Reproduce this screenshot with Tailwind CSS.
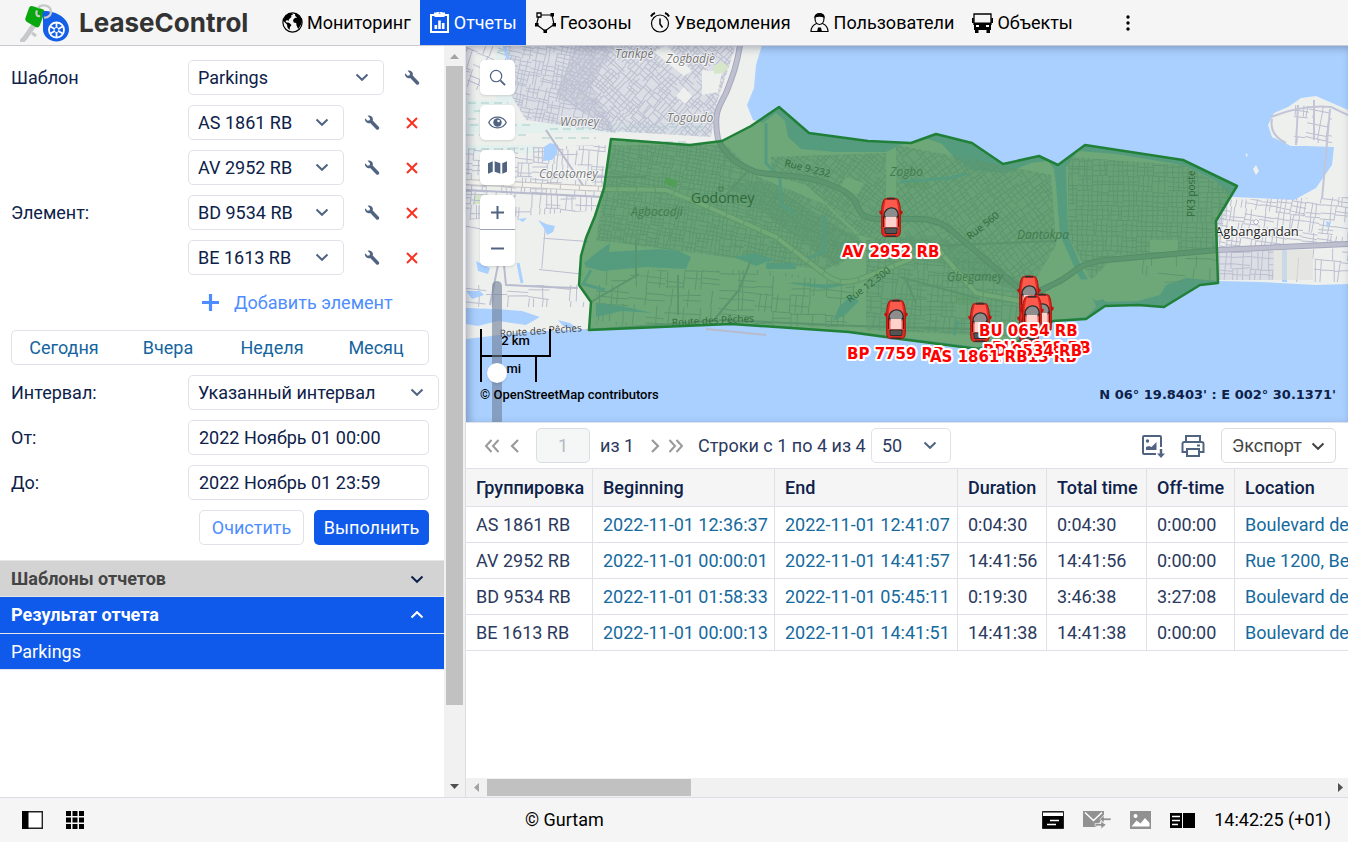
<!DOCTYPE html>
<html lang="ru">
<head>
  <meta charset="UTF-8" />
  <meta name="viewport" content="width=device-width, initial-scale=1.0" />
  <title>LeaseControl - Отчеты</title>
  <script src="https://cdn.jsdelivr.net/npm/@tailwindcss/browser@4"></script>
</head>
<body class="flex h-screen flex-col overflow-hidden bg-white font-['Roboto','Liberation_Sans',sans-serif] text-[18px] leading-6 text-[#0d2149]">

  <!-- shared icons -->
  <svg class="hidden" aria-hidden="true">
    <symbol id="chevron" viewBox="0 0 14 14"><path d="M1.5 4.500 7 9.800l5.500-5.300" fill="none" stroke="currentColor" stroke-width="2" /></symbol>
    <symbol id="wrench" viewBox="0 0 16 16"><path d="M1 3.200 3.600 5.700 5.700 5.200 6 3.200 3.600.8C5.800.1 8 1 8.700 3c.3.9.2 1.700 0 2.500l6 6.200c.7.8.7 1.700 0 2.500-.8.700-1.800.7-2.500 0L6.200 8.100c-.8.300-1.700.2-2.500-.1C1.600 7.200.5 5.200 1 3.200z" fill="currentColor" /></symbol>
    <symbol id="cross" viewBox="0 0 12 12"><path d="m1 1 10 10M11 1 1 11" stroke="currentColor" stroke-width="2" /></symbol>
    <symbol id="car" viewBox="0 0 24 41">
      <path d="M0 14.500 5 12v5l-4 .5zM24 14.500 19 12v5l4 .5z" fill="#c3150f" />
      <path d="M5 2.500C7 .4 17 .4 19 2.500c1.500 3 2.500 8 2.300 13v19c-.2 3-1.300 4.700-3.300 5.200H6c-2-.5-3.100-2.200-3.300-5.200v-19C2.500 10.500 3.500 5.500 5 2.500z" fill="#e0291f" stroke="#a8130d" />
      <path d="M6.500 3h11l1.700 9v20l-1.700 5h-11l-1.700-5V12z" fill="#fb5a4c" />
      <path d="M8 .9h8v1.500H8zM7 38.600h10V40H7z" fill="#333" />
      <path d="M5 18C5.500 9.500 18.500 7.500 19.300 18l-1.800 3h-11z" fill="#8d8d8d" stroke="#2d2d2d" stroke-width="1.400" />
      <path d="M6.500 20h11V30h-11z" fill="#ffd2cd" />
      <path d="M5.600 31h12.800l-.8 5.500H6.400z" fill="#555" stroke="#2d2d2d" />
      <path d="M4.500 19v11M19.500 19v11" stroke="#79100d" stroke-width="1.200" />
    </symbol>
  </svg>

  <header class="relative z-10 flex h-[45px] shrink-0 items-stretch bg-[#f5f5f5] text-black shadow-[0_1px_0_#c9cad1]">
    <a href="#" class="flex w-[273px] items-center gap-[9px] pl-5">
      <svg class="h-[38px] w-[50px]" viewBox="0 0 50 38">
        <path d="M14 21 5 34l-3 3" fill="none" stroke="#c6c8c9" stroke-width="5" stroke-linecap="round" />
        <path d="m12 29 4 3" stroke="#c6c8c9" stroke-width="3" />
        <path d="M12 2 22 5c2 .6 3 2 2.300 4L20 21c-.7 2-2.300 3-4.300 2L7 18c-1.600-1-2.200-2.500-1.500-4.200L9 4c.5-1.500 1.500-2.300 3-2z" fill="#0aa80f" />
        <path d="M25 7c9 0 24 6 24 18.500C49 32 43.500 37.500 36.500 37.500S23 32 23 25.500c0-5 .3-9-.5-15C22.300 8.500 23 7 25 7z" fill="#145fe8" />
        <path d="M17 6.500C15.500 10 17 13 20 12M18 4c3-4 13-3.500 13 4 0 3-3 6-7 5.500" fill="none" stroke="#c6c8c9" stroke-width="2.200" />
        <circle cx="36.500" cy="26" r="7.500" fill="none" stroke="#fff" stroke-width="1.800" />
        <path d="M36.500 19v14M30.400 22.500l12.200 7M42.600 22.500l-12.200 7" stroke="#fff" stroke-width="1.700" />
        <circle cx="36.500" cy="26" r="2.500" fill="#145fe8" stroke="#fff" />
      </svg>
      <span class="font-['Inter',sans-serif] text-[26px] font-bold text-[#333]">LeaseControl</span>
    </a>
    <nav class="flex items-stretch">
      <a href="#" class="flex items-center gap-1 px-[9px]">
        <svg class="size-[21px]" viewBox="0 0 21 21">
          <circle cx="10.500" cy="10.500" r="9.600" fill="none" stroke="#000" stroke-width="1.200" />
          <path d="M2.500 5.500C4 3 6.500 1.300 9.500 1l1.500 1.800-2 .7.500 1.500-2.500 2.300L6.500 9 5 8l-1.500 1 1 1.500 2.500.3 2.500 2.200-1.500 2-.5 3-2-2.500-.5-3L2.500 10l-1-1zM13 1.300c3.500.9 6.300 4 6.700 7.700l.1 1.500-1.300 3-2.300 3.500-1.700-3.500-.3-2.500-2.500-.5L11 8l1.800-2 2.400-.5-2-1.500z" fill="#000" />
        </svg>
        Мониторинг
      </a>
      <a href="#" class="flex items-center gap-1 bg-[#105aeb] px-[9px] text-white" aria-current="page">
        <svg class="size-[21px]" viewBox="0 0 21 21">
          <path d="M2 3h4V1.500h2.500a2 2 0 0 1 4 0H15V3h4v17H2z" fill="none" stroke="#fff" stroke-width="2" />
          <path d="M5.500 1.500h10V5h-10z" fill="#fff" />
          <path d="M5.500 13h2.700v4H5.500zM9.200 8.500h2.600V17H9.200zM12.900 11h2.600v6h-2.600z" fill="#fff" />
        </svg>
        Отчеты
      </a>
      <a href="#" class="flex items-center gap-1 px-[9px]">
        <svg class="size-[21px]" viewBox="0 0 21 21">
          <path d="m4 3 13 0 2 9.500-9 6.500-8.500-6.500z" fill="none" stroke="#000" stroke-width="1.200" />
          <path d="M2 1h4v4H2z" fill="#f5f5f5" stroke="#000" stroke-width="1.300" />
          <path d="M15.500 1H19v3.500h-3.500zM0 11h3.500v3.500H0zM17.500 11H21v3.500h-3.500zM8.500 17.500H12V21H8.500z" />
        </svg>
        Геозоны
      </a>
      <a href="#" class="flex items-center gap-1 px-[9px]">
        <svg class="size-[21px]" viewBox="0 0 21 21" fill="none" stroke="#000">
          <circle cx="10" cy="11.500" r="8.500" stroke-width="1.200" />
          <path d="M10 6.500V12l2.500 3.500" stroke-width="1.500" />
          <path d="M1 4.500C1.800 2.800 3 1.600 5 1M19 4.500C18.200 2.800 17 1.600 15 1" stroke-width="2" />
        </svg>
        Уведомления
      </a>
      <a href="#" class="flex items-center gap-1 px-[9px]">
        <svg class="size-[21px]" viewBox="0 0 21 21" fill="none" stroke="#000" stroke-width="1.200">
          <path d="M6 6c0-3 2-4.500 4.500-4.500S15 3 15 6c0 4-2 6.500-4.500 6.500S6 10 6 6zM7.500 11.500C4 13 2 15 2 19.500h17c0-4.500-2-6.500-5.500-8" />
          <path d="M6 5C6 1 15 1 15 5c-2-1.200-7-1.200-9 0zM9.500 16h2l.8 3.500H8.700z" fill="#000" />
        </svg>
        Пользователи
      </a>
      <a href="#" class="flex items-center gap-1 px-[9px]">
        <svg class="size-[21px]" viewBox="0 0 21 21">
          <path d="M2 13V2h17v11" fill="none" stroke="#000" stroke-width="1.300" />
          <path d="M0 6h1.800v5H0zM19.200 6H21v5h-1.800zM2 10.500h17V18h-1v3h-3.500v-3h-8v3H3v-3H2z" />
          <path d="M4 13h3v2H4zM14 13h3v2h-3z" fill="#f5f5f5" />
        </svg>
        Объекты
      </a>
    </nav>
    <button type="button" class="ml-9 w-5" aria-label="Ещё">
      <svg class="mx-auto h-4 w-1" viewBox="0 0 4 16"><circle cx="2" cy="2" r="1.700" /><circle cx="2" cy="8" r="1.700" /><circle cx="2" cy="14" r="1.700" /></svg>
    </button>
  </header>

  <main class="flex min-h-0 flex-1">
    <aside class="flex w-[466px] shrink-0 border-r border-[#dcdde4]">
      <div class="min-w-0 flex-1">
        <form class="grid grid-cols-1 gap-2.5 pt-[15px] pr-[15px] pb-[15px] pl-[11px]" onsubmit="return false">
          <div class="flex items-center">
            <label for="template" class="w-[177px]">Шаблон</label>
            <div class="relative w-[196px]">
              <select id="template" class="h-[35px] w-full appearance-none rounded-[5px] border border-[#e1e1ea] bg-white pl-[9px]"><option>Parkings</option></select>
              <svg class="pointer-events-none absolute top-[10px] right-[15px] size-3.5 text-[#506482]"><use href="#chevron" /></svg>
            </div>
            <button type="button" class="ml-5 text-[#506482]" aria-label="Настроить шаблон"><svg class="size-4"><use href="#wrench" /></svg></button>
          </div>

          <div class="flex items-center">
            <span class="w-[177px]">Элемент:</span>
            <div class="grid flex-1 gap-2.5">
              <div class="flex items-center">
                <div class="relative w-[156px]">
                  <select aria-label="Элемент 1" class="h-[35px] w-full appearance-none rounded-[5px] border border-[#e1e1ea] bg-white pl-[9px]"><option>AS 1861 RB</option></select>
                  <svg class="pointer-events-none absolute top-[10px] right-[15px] size-3.5 text-[#506482]"><use href="#chevron" /></svg>
                </div>
                <button type="button" class="ml-5 text-[#506482]" aria-label="Настроить"><svg class="size-4"><use href="#wrench" /></svg></button>
                <button type="button" class="ml-[26px] text-[#f9311f]" aria-label="Удалить"><svg class="size-3"><use href="#cross" /></svg></button>
              </div>
              <div class="flex items-center">
                <div class="relative w-[156px]">
                  <select aria-label="Элемент 2" class="h-[35px] w-full appearance-none rounded-[5px] border border-[#e1e1ea] bg-white pl-[9px]"><option>AV 2952 RB</option></select>
                  <svg class="pointer-events-none absolute top-[10px] right-[15px] size-3.5 text-[#506482]"><use href="#chevron" /></svg>
                </div>
                <button type="button" class="ml-5 text-[#506482]" aria-label="Настроить"><svg class="size-4"><use href="#wrench" /></svg></button>
                <button type="button" class="ml-[26px] text-[#f9311f]" aria-label="Удалить"><svg class="size-3"><use href="#cross" /></svg></button>
              </div>
              <div class="flex items-center">
                <div class="relative w-[156px]">
                  <select aria-label="Элемент 3" class="h-[35px] w-full appearance-none rounded-[5px] border border-[#e1e1ea] bg-white pl-[9px]"><option>BD 9534 RB</option></select>
                  <svg class="pointer-events-none absolute top-[10px] right-[15px] size-3.5 text-[#506482]"><use href="#chevron" /></svg>
                </div>
                <button type="button" class="ml-5 text-[#506482]" aria-label="Настроить"><svg class="size-4"><use href="#wrench" /></svg></button>
                <button type="button" class="ml-[26px] text-[#f9311f]" aria-label="Удалить"><svg class="size-3"><use href="#cross" /></svg></button>
              </div>
              <div class="flex items-center">
                <div class="relative w-[156px]">
                  <select aria-label="Элемент 4" class="h-[35px] w-full appearance-none rounded-[5px] border border-[#e1e1ea] bg-white pl-[9px]"><option>BE 1613 RB</option></select>
                  <svg class="pointer-events-none absolute top-[10px] right-[15px] size-3.5 text-[#506482]"><use href="#chevron" /></svg>
                </div>
                <button type="button" class="ml-5 text-[#506482]" aria-label="Настроить"><svg class="size-4"><use href="#wrench" /></svg></button>
                <button type="button" class="ml-[26px] text-[#f9311f]" aria-label="Удалить"><svg class="size-3"><use href="#cross" /></svg></button>
              </div>
              <button type="button" class="flex h-[35px] items-center gap-[15px] pl-3.5 text-[#4d8dff]">
                <svg class="size-[17px]" viewBox="0 0 17 17"><path d="M8.500 0v17M0 8.500h17" stroke="currentColor" stroke-width="3.200" /></svg>
                Добавить элемент
              </button>
            </div>
          </div>

          <div class="grid h-[35px] grid-cols-4 rounded-[5px] border border-[#e1e1ea] text-[#15659e]">
            <button type="button">Сегодня</button>
            <button type="button">Вчера</button>
            <button type="button">Неделя</button>
            <button type="button">Месяц</button>
          </div>

          <div class="-mr-2.5 flex items-center">
            <label for="interval" class="w-[177px]">Интервал:</label>
            <div class="relative flex-1">
              <select id="interval" class="h-[35px] w-full appearance-none rounded-[5px] border border-[#e1e1ea] bg-white pl-[9px]"><option>Указанный интервал</option></select>
              <svg class="pointer-events-none absolute top-[10px] right-[15px] size-3.5 text-[#506482]"><use href="#chevron" /></svg>
            </div>
          </div>
          <div class="flex items-center">
            <label for="from" class="w-[177px]">От:</label>
            <input id="from" type="text" value="2022 Ноябрь 01 00:00" class="h-[35px] min-w-0 flex-1 rounded-[5px] border border-[#e1e1ea] px-2.5" />
          </div>
          <div class="flex items-center">
            <label for="to" class="w-[177px]">До:</label>
            <input id="to" type="text" value="2022 Ноябрь 01 23:59" class="h-[35px] min-w-0 flex-1 rounded-[5px] border border-[#e1e1ea] px-2.5" />
          </div>
          <div class="flex justify-end gap-2.5">
            <button type="button" class="h-[35px] w-[105px] rounded-[5px] border border-[#e1e1ea] text-[#4d8dff]">Очистить</button>
            <button type="submit" class="h-[35px] w-[115px] rounded-[5px] bg-[#105aeb] text-white">Выполнить</button>
          </div>
        </form>

        <button type="button" class="flex h-[37px] w-full items-center justify-between border-t border-b border-[#e6e6e6] bg-[#d3d3d3] pr-5 pl-[11px] font-bold text-[#444]">
          Шаблоны отчетов
          <svg class="size-3.5 text-[#0d2149]"><use href="#chevron" /></svg>
        </button>
        <button type="button" class="flex h-[37px] w-full items-center justify-between border-b border-[#e6e6e6] bg-[#105aeb] pr-5 pl-[11px] font-bold text-white">
          Результат отчета
          <svg class="size-3.5 rotate-180"><use href="#chevron" /></svg>
        </button>
        <button type="button" class="flex h-9 w-full items-center border-b border-[#e6e6e6] bg-[#105aeb] pl-[11px] text-white">Parkings</button>
      </div>

      <!-- vertical scrollbar -->
      <div class="flex w-[21px] flex-col items-center bg-[#f1f1f1]" aria-hidden="true">
        <svg class="h-[21px] w-[9px] text-[#a3a3a3]" viewBox="0 0 9 21"><path d="m0 14 4.500-5L9 14z" fill="currentColor" /></svg>
        <div class="w-[17px] flex-1"><div class="h-[90%] bg-[#c1c1c1]"></div></div>
        <svg class="h-[21px] w-[9px] text-[#505050]" viewBox="0 0 9 21"><path d="m0 8 4.500 5L9 8z" fill="currentColor" /></svg>
      </div>
    </aside>

    <section class="flex min-w-0 flex-1 flex-col">
      <div class="relative h-[377px] shrink-0 overflow-hidden bg-[#aad0ff]">
        <svg id="map" class="absolute inset-0 h-[377px] w-full min-w-[882px]" viewBox="0 0 882 377" preserveAspectRatio="xMinYMin slice" role="img" aria-label="Карта">
          <!-- land -->
          <g fill="#eef0ee">
            <path d="M0 0H296L290 20 288 43 281 60 287 75 297 78 310 68 319 76 322 92 335 104 370 107 420 107 434 100 462 94 476 99 488 112 505 125 540 128 565 118 582 116 588 124 590 140 594 190 612 230 626 250 630 262 620 272 587 275 550 292 512 302 434 292 383 286 265 278 123 284 60 287 0 294Z" />
            <path d="M600 122 612 106 650 109 717 120 748 135 766 152 790 153 828 155 850 143 866 120 868 102 840 101 825 101 806 92 802 80 808 68 822 62 835 53 850 51 866 58 882 65V239L850 240 795 237 752 236 720 233 700 240 694 250 672 256 640 257 632 250 618 228 602 190Z" />
            <path d="m790 120 3 6-3 4-3-6zM780 108l2 2-2 2z" />
          </g>
          <!-- marshes and parks -->
          <path d="M0 55h40v14H0zM0 78h240v10H0zM0 100h70v8H0zM30 0h18v60H30z" fill="#e4f0ee" />
          <path d="M2 58h40M8 66h32M2 74h36M4 80h60m20 4h60m20-2h74M0 90h62m14 3h54m30 4h60M2 104h56M32 6h14m-12 10h14M32 28h14m-12 12h14M362 190h40m-34 8h52m-46 8h40" stroke="#a5cfc8" stroke-dasharray="8 5" />
          <g fill="#d5e6c9">
            <path d="M8 150h8v9H8zM492 250h18v10h-18zM110 48h9v5h-9zM440 137h24v6h-24z" />
          </g>
          <!-- streets are filled in by the script below -->
          <g id="streets" fill="none" stroke="#bcbfd0"></g>
          <g fill="#eef0ee">
            <path d="m218 42 8 9-7 8-9-8zM200 0l26 26-8 5-30-24zM380 132l18 6-6 11-20-3zM236 50V25l20 2-4 20zM684 195h28v12h-28zM610 235l30-2 20 15-30 8z" />
          </g>
          <path d="m248 20 8-3 6 4-4 7-10 1z" fill="#d5e6c9" />
          <path d="m200 132 12 4-3 7-10-4z" fill="#a0d690" />
          <!-- lakes and channels -->
          <g fill="#aad0ff">
            <path d="m78 102 6-4 8 2-1 9-5 6-9 1zM72 175l8 4 9 2-2 6-6 3-3-7zM52 174l9-1-4 4zM0 263l30 1 26 2 18 6-14 8-28-4-20 5-12-2zM10 216l14 7-2 6-10-3zM92 275l12 3 8 6-14-2zM0 246h14l4 4-12 4z" />
            <path d="m118 218 12-10 14-10-1 9 50-3 20 2 12 6-5 12-40-2-44 4-16-4zM268 212l20-4 20 6-18 7zM300 218h30v6h-30zM130 258l30 4 26 6-30-2-26 6zM385 250l8 6-14 14-12 6 6-14zM320 238l60 2-20 4z" />
            <path d="M816 205h5v32h-5zM860 176l5 2-4 5z" />
          </g>
          <g fill="none" stroke="#aad0ff" stroke-width="3">
            <path d="M300 78v40l14 16 1 25 14 10M358 170v36l-16 8M125 225l-8 14 22 6M52 218l4 20M38 0l4 14M434 137l50-4 16-4M488 290l4-14" />
          </g>
          <!-- roads -->
          <g fill="none" stroke-linejoin="round">
            <path d="M0 145 138 152M80 85l40 60M36 200l-12 60M36 200 40 240 80 242 112 243M170 195v38M125 257l48-28M212 230v40M285 215l-12 30-25 30M120 285l140-10 130 6 150 4M130 132h50M260 150l22-24M300 290l-60-6M450 258 440 235M434 232l80 22M558 250 600 232M590 196l-160 6" stroke="#b8bbcd" stroke-width="2" />
            <path d="M274 0c-3 20-7 30-14 48-7 14-13 20-8 46 8 18 20 26 38 33 18 4 34 2 60 8 26 8 38 14 42 28 4 10 14 12 34 11 30-1 46-1 60 12l70 60c14 6 20-2 34-8 18-8 20-20 50-23l112-10 130-6" stroke="#a5a8bd" stroke-width="6" />
            <path d="M274 0c-3 20-7 30-14 48-7 14-13 20-8 46 8 18 20 26 38 33 18 4 34 2 60 8 26 8 38 14 42 28 4 10 14 12 34 11 30-1 46-1 60 12l70 60c14 6 20-2 34-8 18-8 20-20 50-23l112-10 130-6" stroke="#bec0d0" stroke-width="4" />
            <path d="m0 137 140 7 60 1 40 16 70 31 50 38c10 8 20 9 35 4l45-18 30-14 40 46 55 10" stroke="#c6c4c4" stroke-width="6" />
            <path d="m0 137 140 7 60 1 40 16 70 31 50 38c10 8 20 9 35 4l45-18 30-14 40 46 55 10" stroke="#f4f2ec" stroke-width="4" stroke-dasharray="18 1" />
            <path d="M805 72c20-8 40-12 60-10l17 8M864 64l-8 90M832 60l-2 40M848 55v40M820 98c-12-6-16-14-14-24" stroke="#c2c5d6" stroke-width="2" />
          </g>
          <path d="M807 205h40v30h-40z" fill="#dfdfd9" opacity=".6" />
          <!-- place names -->
          <g font-family="'Open Sans', 'DejaVu Sans', sans-serif" fill="#777" stroke="#fff" stroke-opacity=".7" stroke-width="2" paint-order="stroke" font-size="12">
            <g font-style="italic">
              <text x="149" y="13">Tankpè</text>
              <text x="200" y="18">Zogbadjè</text>
              <text x="94" y="81">Womey</text>
              <text x="201" y="77">Togoudo</text>
              <text x="73" y="133">Cocotomey</text>
              <g stroke-width="0">
                <text x="165" y="171">Agbocodji</text>
                <text x="424" y="131">Zogbo</text>
                <text x="551" y="194">Dantokpa</text>
                <text x="481" y="236">Gbegamey</text>
              </g>
            </g>
            <g fill="#444" stroke-width="0">
              <text x="34" y="292" font-size="10" transform="rotate(-4 34 292)">Route des Pêches</text>
              <text x="206" y="281" font-size="10" transform="rotate(-3 206 281)">Route des Pêches</text>
              <text x="318" y="121" font-size="10" transform="rotate(14 318 121)">Rue 9-232</text>
              <text x="384" y="258" font-size="10" transform="rotate(-37 384 258)">Rue 12.300</text>
              <text x="504" y="195" font-size="10" transform="rotate(-38 504 195)">Rue 560</text>
              <text x="729" y="172" font-size="10" transform="rotate(-90 729 172)">PK3 poste</text>
              <text x="225" y="158" font-size="14">Godomey</text>
              <text x="749" y="191" font-size="13" fill="#222" stroke-width="2">Agbangandan</text>
            </g>
            <rect x="253" y="142" width="4" height="4" fill="none" stroke="#555" stroke-width="1" />
            <circle cx="790" cy="177" r="2" fill="#fff" stroke="#668" stroke-width="1" stroke-opacity="1" />
          </g>
          <!-- geofence -->
          <path d="M145 94 224 100 256 96 285 81 313 62 343 88 402 96 445 98 470 89 506 98 537 119 573 111 592 120 619 100 717 115 771 141 750 176 752 238 734 240 698 262 672 260 639 261 620 274 587 276 550 298 512 304 434 294 383 287 265 279 123 285 125 257 113 240 115 211 120 193 129 171 138 143Z" fill="#237d35" fill-opacity=".63" stroke="#208038" stroke-width="2.500" stroke-linejoin="round" />
          <!-- vehicles -->
          <g>
            <use href="#car" x="413" y="152" width="24" height="41" />
            <use href="#car" x="418" y="254" width="24" height="41" />
            <use href="#car" x="502" y="257" width="24" height="41" />
            <use href="#car" x="551" y="230" width="24" height="41" />
            <use href="#car" x="564" y="248" width="24" height="41" />
            <use href="#car" x="551" y="258" width="24" height="41" />
            <use href="#car" x="554" y="250" width="24" height="41" />
          </g>
          <g font-family="'DejaVu Sans', sans-serif" font-size="15" font-weight="700" fill="#f00" stroke="#fff" stroke-width="4" paint-order="stroke" stroke-linejoin="round">
            <text x="376" y="212">AV 2952 RB</text>
            <text x="381" y="314">BP 7759 RB</text>
            <text x="514" y="317">BE 1613 RB</text>
            <text x="526" y="308">BU 0658 RB</text>
            <text x="517" y="311">BD 9534 RB</text>
            <text x="464" y="317">AS 1861 RB</text>
            <text x="513" y="291">BU 0654 RB</text>
          </g>
        </svg>

        <div class="absolute inset-0 shadow-[inset_3px_3px_8px_rgba(40,50,80,0.35)]"></div>

        <div class="absolute top-[15px] left-3.5 grid gap-2.5 text-[#506482]">
          <button type="button" class="grid size-[35px] place-items-center rounded-[5px] bg-white shadow" aria-label="Поиск">
            <svg class="size-[17px]" viewBox="0 0 18 18" fill="none" stroke="currentColor"><circle cx="7.500" cy="7.500" r="6" stroke-width="1.300" /><path d="m12 12 5 5" stroke-width="2" /></svg>
          </button>
          <button type="button" class="grid size-[35px] place-items-center rounded-[5px] bg-white shadow" aria-label="Видимость">
            <svg class="h-[13px] w-[19px]" viewBox="0 0 18 12"><path d="M.7 6C4-.7 14-.7 17.300 6 14 12.700 4 12.700.7 6z" fill="none" stroke="currentColor" stroke-width="1.200" /><circle cx="9" cy="6" r="4" fill="currentColor" /><circle cx="10" cy="4.500" r="1.200" fill="#fff" /></svg>
          </button>
          <button type="button" class="grid size-[35px] place-items-center rounded-[5px] bg-white shadow" aria-label="Слои карты">
            <svg class="h-[15px] w-[19px]" viewBox="0 0 20 14"><path d="m0 2.500 5-2v11l-5 2zM7 .5l6 2v11l-6-2zM15 2.500l5-2v11l-5 2z" fill="currentColor" /></svg>
          </button>
          <div class="grid divide-y divide-[#9aa3b2] rounded-[5px] bg-white shadow">
            <button type="button" class="grid size-[35px] place-items-center" aria-label="Приблизить"><svg class="size-[13px]" viewBox="0 0 13 13"><path d="M6.500 0v13M0 6.500h13" stroke="currentColor" stroke-width="2" /></svg></button>
            <button type="button" class="grid h-9 w-[35px] place-items-center" aria-label="Отдалить"><svg class="size-[13px]" viewBox="0 0 13 13"><path d="M0 6.500h13" stroke="currentColor" stroke-width="2" /></svg></button>
          </div>
        </div>

        <!-- scale bars -->
        <div class="absolute top-[284px] left-3.5 text-[13px] font-medium text-black">
          <div class="h-7 w-[71px] border-x-2 border-b-2 border-black text-center">2 km</div>
          <div class="h-[25px] w-[57px] border-x-2 border-black text-center">1 mi</div>
        </div>
        <div class="absolute top-[236px] left-[26px] h-[141px] w-2.5 rounded-t-[5px] bg-[#6e7d96]/60"></div>
        <div class="absolute top-[318px] left-[21px] size-5 rounded-full bg-white shadow"></div>
        <div class="absolute bottom-[15px] left-3.5 text-[13px] font-medium text-black">© <a href="#">OpenStreetMap</a> contributors</div>
        <div class="absolute right-3 bottom-[15px] font-['DejaVu_Sans',sans-serif] text-[13px] font-bold">N 06° 19.8403' : E 002° 30.1371'</div>
      </div>

      <div class="flex h-[46px] shrink-0 items-center border-t border-[#e1e1ea] pr-3 pl-[18px] text-[#2b3a5e]">
        <button type="button" class="text-[#9a9a9a]" aria-label="Первая страница"><svg class="h-3.5 w-4" viewBox="0 0 16 14" fill="none" stroke="currentColor" stroke-width="2"><path d="M7.500 1 2 7l5.500 6M14.500 1 9 7l5.500 6" /></svg></button>
        <button type="button" class="ml-2.5 text-[#9a9a9a]" aria-label="Предыдущая страница"><svg class="h-3.5 w-2.5" viewBox="0 0 10 14" fill="none" stroke="currentColor" stroke-width="2.200"><path d="M8 1 2 7l6 6" /></svg></button>
        <input type="text" value="1" disabled aria-label="Страница" class="mr-2.5 ml-4 h-[35px] w-[54px] rounded-[5px] border border-[#dcdde4] bg-[#f5f6f6] text-center text-[#b4bac6]" />
        <span class="w-[50px]">из 1</span>
        <button type="button" class="text-[#9a9a9a]" aria-label="Следующая страница"><svg class="h-3.5 w-2.5" viewBox="0 0 10 14" fill="none" stroke="currentColor" stroke-width="2.200"><path d="m2 1 6 6-6 6" /></svg></button>
        <button type="button" class="ml-2 text-[#9a9a9a]" aria-label="Последняя страница"><svg class="h-3.5 w-4" viewBox="0 0 16 14" fill="none" stroke="currentColor" stroke-width="2"><path d="m1.500 1 5.500 6-5.500 6M8.500 1 14 7l-5.500 6" /></svg></button>
        <span class="ml-3.5 w-[173px] whitespace-nowrap">Строки с 1 по 4 из 4</span>
        <div class="relative w-20">
          <select aria-label="Строк на странице" class="h-[35px] w-full appearance-none rounded-[5px] border border-[#e1e1ea] bg-white pl-2.5"><option>50</option></select>
          <svg class="pointer-events-none absolute top-[10px] right-3.5 size-3.5 text-[#506482]"><use href="#chevron" /></svg>
        </div>
        <button type="button" class="ml-auto text-[#506482]" aria-label="Сохранить карту">
          <svg class="size-6" viewBox="0 0 24 24"><path d="M15 20H3q-1 0-1-1V3q0-1 1-1h16q1 0 1 1v10" fill="none" stroke="currentColor" stroke-width="2" /><circle cx="6.500" cy="7" r="1.700" fill="currentColor" /><path d="M5 16v-3l3-1 2.500 1 5-5V16zM18.800 15h2.400v4.500H24L20 24l-4-4.500h2.800z" fill="currentColor" /></svg>
        </button>
        <button type="button" class="mx-4 text-[#506482]" aria-label="Печать">
          <svg class="size-6" viewBox="0 0 24 24" fill="none" stroke="currentColor" stroke-width="2"><path d="M5 8V2h14v6M5 18H1.500V10q0-2 2-2h17q2 0 2 2v8H19M6 15h12v7H6z" /><path d="M16 11.500h3" /></svg>
        </button>
        <button type="button" class="flex h-[35px] w-[115px] items-center justify-between rounded-[5px] border border-[#dcdcdc] pr-2.5 pl-2.5 text-[#444]">
          Экспорт
          <svg class="size-3.5"><use href="#chevron" /></svg>
        </button>
      </div>

      <div class="min-h-0 flex-1 overflow-hidden">
        <table class="w-full min-w-[1100px] table-fixed border-separate border-spacing-0 text-left whitespace-nowrap text-[#2b3a5e] [&_a]:text-[#156a9e] [&_td]:h-9 [&_td]:border-r [&_td]:border-b [&_td]:border-[#dfe0e8] [&_td]:px-2.5 [&_td]:py-0 [&_th]:h-[39px] [&_th]:border-y [&_th]:border-r [&_th]:border-[#dfe0e8] [&_th]:bg-[#f5f5f6] [&_th]:px-2.5 [&_th]:py-0">
          <colgroup>
            <col class="w-[127px]" /><col class="w-[182px]" /><col class="w-[183px]" /><col class="w-[89px]" /><col class="w-[100px]" /><col class="w-[88px]" /><col />
          </colgroup>
          <thead>
            <tr class="text-[#0d2149] [&>th]:font-medium">
              <th>Группировка</th><th>Beginning</th><th>End</th><th>Duration</th><th>Total time</th><th>Off-time</th><th>Location</th>
            </tr>
          </thead>
          <tbody>
            <tr><td>AS 1861 RB</td><td><a href="#">2022-11-01 12:36:37</a></td><td><a href="#">2022-11-01 12:41:07</a></td><td>0:04:30</td><td>0:04:30</td><td>0:00:00</td><td><a href="#">Boulevard de la Marina</a></td></tr>
            <tr><td>AV 2952 RB</td><td><a href="#">2022-11-01 00:00:01</a></td><td><a href="#">2022-11-01 14:41:57</a></td><td>14:41:56</td><td>14:41:56</td><td>0:00:00</td><td><a href="#">Rue 1200, Benin</a></td></tr>
            <tr><td>BD 9534 RB</td><td><a href="#">2022-11-01 01:58:33</a></td><td><a href="#">2022-11-01 05:45:11</a></td><td>0:19:30</td><td>3:46:38</td><td>3:27:08</td><td><a href="#">Boulevard de la Marina</a></td></tr>
            <tr><td>BE 1613 RB</td><td><a href="#">2022-11-01 00:00:13</a></td><td><a href="#">2022-11-01 14:41:51</a></td><td>14:41:38</td><td>14:41:38</td><td>0:00:00</td><td><a href="#">Boulevard de la Marina</a></td></tr>
          </tbody>
        </table>
      </div>

      <!-- horizontal scrollbar -->
      <div class="flex h-[19px] shrink-0 items-center bg-[#f1f1f1]" aria-hidden="true">
        <svg class="h-[9px] w-[21px] text-[#a3a3a3]" viewBox="0 0 21 9"><path d="m13 0-5 4.500L13 9z" fill="currentColor" /></svg>
        <div class="h-[17px] flex-1"><div class="h-full w-[204px] bg-[#c1c1c1]"></div></div>
        <svg class="h-[9px] w-4 text-[#505050]" viewBox="0 0 16 9"><path d="m6 0 5 4.500L6 9z" fill="currentColor" /></svg>
      </div>
    </section>
  </main>

  <footer class="flex h-[45px] shrink-0 items-center border-t border-[#dcdde4] bg-[#f5f5f5] pr-[17px] pl-[22px] text-black">
    <button type="button" aria-label="Панель"><svg class="h-[18px] w-[21px]" viewBox="0 0 21 18"><path d="M.7.7h19.600v16.600H.7z" fill="#fff" stroke="#222" stroke-width="1.400" /><path d="M0 0h6.500v18H0z" /></svg></button>
    <button type="button" class="ml-[23px]" aria-label="Приложения"><svg class="size-[18px]" viewBox="0 0 18 18"><path d="M0 0h5v5H0zM6.500 0h5v5h-5zM13 0h5v5h-5zM0 6.500h5v5H0zM6.500 6.500h5v5h-5zM13 6.500h5v5h-5zM0 13h5v5H0zM6.500 13h5v5h-5zM13 13h5v5h-5z" /></svg></button>
    <span class="ml-[441px]">© Gurtam</span>
    <div class="ml-auto flex items-center gap-[19px]">
      <button type="button" aria-label="Журнал"><svg class="h-[18px] w-[22px]" viewBox="0 0 22 18"><path d="M.5.500h21v17H.5z" stroke="#222" /><path d="M1 1.500h20v3.500H1z" fill="#fff" /><path d="M8 9.500h9M5 13.500h9" stroke="#fff" stroke-width="1.500" /></svg></button>
      <button type="button" aria-label="Сообщения"><svg class="h-[18px] w-7" viewBox="0 0 28 18"><path d="M0 0h21v6l-8 10H0z" fill="#919191" /><path d="m2 1.500 8.500 8 8.500-8" fill="none" stroke="#fff" stroke-width="1.500" /><path d="M21 4v3h7v2.500h-7v3L17 8.300zM18 9.500v3h-6V15h6v3l5-4.200z" fill="#919191" stroke="#f5f5f5" stroke-width=".7" /></svg></button>
      <button type="button" aria-label="Изображения"><svg class="h-[18px] w-[21px]" viewBox="0 0 21 18"><path d="M0 0h21v18H0z" fill="#919191" /><path d="m1.500 15.500 5-6 4 3 4.500-5.500 4.500 5v3.500z" fill="#fff" /><circle cx="5.500" cy="5" r="2" fill="#fff" /></svg></button>
      <button type="button" aria-label="Разделение экрана"><svg class="h-[15px] w-[25px]" viewBox="0 0 25 15"><path d="M0 0h12v15H0zM13 0h12v15H13z" /><path d="M2 3.500h8M2 7.500h8M2 11.500h6" stroke="#fff" stroke-width="1.500" /></svg></button>
      <span>14:42:25 (+01)</span>
    </div>
  </footer>

  <script>
    // street grid of each district: outline, direction, block size, share of segments drawn
    const districts = [
      { area: "40,0 150,0 125,40 150,88 60,75 45,50", angle: 12, block: 4, fill: 0.75 },
      { area: "110,0 270,0 250,60 245,92 145,86 90,50", angle: 42, block: 4, fill: 0.75 },
      { area: "0,0 40,0 40,50 0,50", angle: 20, block: 6, fill: 0.5 },
      { area: "0,104 140,100 135,165 0,175", angle: 3, block: 5, fill: 0.65 },
      { area: "0,175 130,165 115,240 0,260", angle: 8, block: 15, fill: 0.12 },
      { area: "0,240 120,240 120,262 0,262", angle: 4, block: 7, fill: 0.3 },
      { area: "145,100 260,100 290,130 400,200 360,225 130,195", angle: 10, block: 4, fill: 0.85 },
      { area: "305,112 420,108 420,200 395,190 340,140 305,130", angle: 38, block: 4, fill: 0.85 },
      { area: "260,140 300,135 360,160 400,200 370,222", angle: 30, block: 4, fill: 0.75 },
      { area: "130,225 300,225 390,240 380,282 130,280", angle: 3, block: 6, fill: 0.5 },
      { area: "430,100 585,130 590,200 560,250 430,200", angle: -38, block: 5, fill: 0.9 },
      { area: "400,195 470,190 580,250 550,292 400,285", angle: 4, block: 5, fill: 0.75 },
      { area: "602,112 717,120 765,145 750,208 650,210 625,235 602,190", angle: 1, block: 5, fill: 0.95 },
      { area: "640,215 750,210 750,235 700,238", angle: 2, block: 9, fill: 0.3 },
      { area: "753,155 882,152 882,200 753,205", angle: 8, block: 5, fill: 0.7 },
      { area: "752,207 808,205 808,235 752,235", angle: 1, block: 6, fill: 0.95 },
      { area: "826,205 882,203 882,237 826,237", angle: 4, block: 9, fill: 0.5 },
      { area: "828,60 866,62 866,98 828,98", angle: 8, block: 7, fill: 0.5 },
    ];

    let seed = 7;
    function random() {
      seed = (seed * 16807) % 2147483647;
      return seed / 2147483647;
    }

    const streets = document.getElementById("streets");
    let markup = "";
    districts.forEach((d, i) => {
      const points = d.area.split(" ").map((p) => p.split(",").map(Number));
      const xs = points.map((p) => p[0]);
      const ys = points.map((p) => p[1]);
      const cx = (Math.min(...xs) + Math.max(...xs)) / 2;
      const cy = (Math.min(...ys) + Math.max(...ys)) / 2;
      const r = Math.hypot(Math.max(...xs) - cx, Math.max(...ys) - cy);
      const jitter = () => (random() - 0.5) * d.block * 0.5;
      let path = "";
      for (let u = -r; u < r; u += d.block) {
        for (let v = -r; v < r; v += d.block * 3) {
          if (random() < d.fill) path += `M${(u + jitter()).toFixed(1)} ${v.toFixed(1)}l${jitter().toFixed(1)} ${d.block * 3}`;
          if (random() < d.fill) path += `M${v.toFixed(1)} ${(u + jitter()).toFixed(1)}l${d.block * 3} ${jitter().toFixed(1)}`;
        }
      }
      // tight blocks read as a built-up tint under the streets
      const tint = d.fill > 0.7 ? `<polygon points="${d.area}" fill="#c4c7d6" fill-opacity="0.45" stroke="none"/>` : "";
      markup += `<clipPath id="d${i}"><polygon points="${d.area}"/></clipPath>${tint}
        <g clip-path="url(#d${i})"><path d="${path}" transform="translate(${cx} ${cy}) rotate(${d.angle})"/></g>`;
    });
    streets.innerHTML = markup;
  </script>
</body>
</html>
